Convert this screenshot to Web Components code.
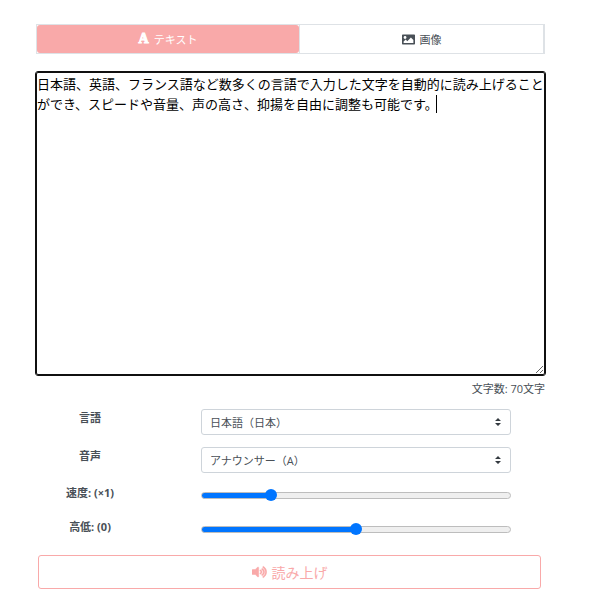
<!DOCTYPE html>
<html lang="ja">
<head>
<meta charset="utf-8">
<meta name="viewport" content="width=device-width, initial-scale=1">
<title>読み上げ</title>
<style>
  body {
    margin: 0;
    background: #fff;
    color: #495057;
    font-family: "Open Sans", "Noto Sans CJK JP", sans-serif;
    font-size: 11px;
  }
</style>
</head>
<body>

<speech-form>
  <mode-tabs slot="tabs">
    <mode-tab selected>
      <span slot="icon" aria-hidden="true">A</span>テキスト
    </mode-tab>
    <mode-tab>
      <svg slot="icon" width="13" height="13" viewBox="0 0 512 512" fill="currentColor" aria-hidden="true"><path d="M484 456H28c-15 0-28-13-28-28V84c0-15 13-28 28-28h456c15 0 28 13 28 28v344c0 15-13 28-28 28zM120 120c-31 0-56 25-56 56s25 56 56 56 56-25 56-56-25-56-56-56zM64 392h384V272l-88-88c-5-5-12-5-17 0L208 320l-56-56c-5-5-12-5-17 0L64 336v56z"/></svg>画像
    </mode-tab>
  </mode-tabs>

  <text-input slot="text">日本語、英語、フランス語など数多くの言語で入力した文字を自動的に読み上げることができ、スピードや音量、声の高さ、抑揚を自由に調整も可能です。</text-input>

  <select-row label="言語" value="日本語（日本）"></select-row>
  <select-row label="音声" value="アナウンサー（A）"></select-row>
  <range-row label="速度: (×1)" min="0.25" max="3.75" value="1"></range-row>
  <range-row label="高低: (0)" min="-20" max="20" value="0"></range-row>

  <speak-button slot="action">読み上げ</speak-button>
</speech-form>

<script>
// page layout
customElements.define(
  'speech-form',
  class extends HTMLElement {
    constructor() {
      super();
      this.attachShadow({mode: 'open'}).innerHTML = `
      <style>
        :host { display: block; padding: 24px 55px 14px 36px; }
        main { display: flex; flex-direction: column; }
        .text { margin-top: 18px; }
        .rows { display: grid; gap: 12px; margin-top: 11px; padding-right: 34px; }
        .action { margin: 14px 4px 0 2px; }
      </style>
      <main>
        <slot name="tabs"></slot>
        <div class="text"><slot name="text"></slot></div>
        <div class="rows"><slot></slot></div>
        <div class="action"><slot name="action"></slot></div>
      </main>
      `;
    }
  }
);

customElements.define(
  'mode-tabs',
  class extends HTMLElement {
    constructor() {
      super();
      this.attachShadow({mode: 'open'}).innerHTML = `
      <style>
        :host { display: block; }
        nav {
          display: grid;
          grid-template-columns: 263fr 244fr;
          border: 1px solid #dee2e6;
        }
      </style>
      <nav><slot></slot></nav>
      `;
    }
  }
);

customElements.define(
  'mode-tab',
  class extends HTMLElement {
    constructor() {
      super();
      this.attachShadow({mode: 'open'}).innerHTML = `
      <style>
        :host { display: block; border-right: 1px solid #dee2e6; }
        button {
          display: flex;
          align-items: center;
          justify-content: center;
          gap: 5px;
          width: 100%;
          height: 28px;
          padding: 0;
          border: 0;
          border-radius: 3px;
          background: #fff;
          color: #495057;
          font: inherit;
        }
        :host([selected]) button { background: #f9a9a9; color: #fff; }
        ::slotted(span) {
          font: bold 14px/14px "Liberation Serif", serif;
          -webkit-text-stroke: 1px currentColor;
        }
      </style>
      <button type="button"><slot name="icon"></slot><span><slot></slot></span></button>
      `;
    }
    connectedCallback() {
      this.shadowRoot.querySelector('button')
        .setAttribute('aria-pressed', this.hasAttribute('selected'));
    }
  }
);

// textarea with the character counter under it
customElements.define(
  'text-input',
  class extends HTMLElement {
    constructor() {
      super();
      this.attachShadow({mode: 'open'}).innerHTML = `
      <style>
        :host { display: block; }
        .field { position: relative; display: flex; }
        textarea {
          flex: 1;
          box-sizing: border-box;
          height: 303px;
          margin: 0;
          padding: 1px 0;
          border: 1px solid #101010;
          border-radius: 2px;
          outline: 1px solid #101010;
          overflow: auto;
          resize: vertical;
          background: #fff;
          color: #000;
          font: 13px/20px "Open Sans", "Noto Sans CJK JP", sans-serif;
          caret-color: transparent;
        }
        /* steady caret at the end of the text, in place of the blinking one */
        .caret {
          position: absolute;
          left: 400px;
          top: 23px;
          width: 1px;
          height: 18px;
          background: #000;
          pointer-events: none;
        }
        .touched .caret { display: none; }
        .touched textarea { caret-color: auto; }
        p { margin: 5px 0 0; text-align: right; line-height: 18px; }
      </style>
      <div class="field">
        <textarea aria-label="テキスト"></textarea>
        <span class="caret"></span>
      </div>
      <p></p>
      `;
    }
    connectedCallback() {
      const field = this.shadowRoot.querySelector('.field');
      const area = this.shadowRoot.querySelector('textarea');
      const count = () => {
        this.shadowRoot.querySelector('p').textContent = `文字数: ${area.value.length}文字`;
      };
      area.value = this.textContent.trim();
      area.addEventListener('input', count);
      for (const type of ['keydown', 'pointerdown', 'blur']) {
        area.addEventListener(type, () => field.classList.add('touched'));
      }
      count();
    }
  }
);

customElements.define(
  'select-row',
  class extends HTMLElement {
    constructor() {
      super();
      this.attachShadow({mode: 'open'}).innerHTML = `
      <style>
        :host {
          display: grid;
          grid-template-columns: 108px 1fr;
          column-gap: 57px;
        }
        label { text-align: center; font-weight: bold; line-height: 18px; }
        .box { display: grid; align-items: center; }
        select, svg { grid-area: 1 / 1; }
        select {
          appearance: none;
          width: 100%;
          height: 26px;
          margin: 0;
          padding: 0 24px 0 8px;
          border: 1px solid #ced4da;
          border-radius: 3px;
          background: #fff;
          color: #495057;
          font: inherit;
        }
        svg { justify-self: end; margin-right: 10px; pointer-events: none; }
      </style>
      <label for="field"></label>
      <div class="box">
        <select id="field"><option></option></select>
        <svg width="6" height="8" viewBox="0 0 6 8" fill="#343a40" aria-hidden="true"><path d="M3 0L0 3h6zm0 8L0 5h6z"/></svg>
      </div>
      `;
    }
    connectedCallback() {
      this.shadowRoot.querySelector('label').textContent = this.getAttribute('label');
      this.shadowRoot.querySelector('option').textContent = this.getAttribute('value');
    }
  }
);

customElements.define(
  'range-row',
  class extends HTMLElement {
    constructor() {
      super();
      this.attachShadow({mode: 'open'}).innerHTML = `
      <style>
        :host {
          display: grid;
          grid-template-columns: 108px 1fr;
          column-gap: 57px;
          align-items: start;
          height: 22px;
        }
        label { text-align: center; font-weight: bold; line-height: 16px; }
        input {
          appearance: none;
          width: 100%;
          height: 21px;
          margin: 0;
          background: none;
        }
        input:focus { outline: none; }
        input::-webkit-slider-runnable-track {
          box-sizing: border-box;
          height: 7px;
          border: 1px solid #bdbdbd;
          border-radius: 4px;
          background: linear-gradient(#0075ff, #0075ff) border-box 0 0 / var(--fill) 100% no-repeat, #efefef;
        }
        input::-webkit-slider-thumb {
          appearance: none;
          width: 12px;
          height: 12px;
          margin-top: -4px;
          border-radius: 50%;
          background: #0075ff;
        }
      </style>
      <label for="field"></label>
      <input type="range" id="field" step="any">
      `;
    }
    connectedCallback() {
      const input = this.shadowRoot.querySelector('input');
      this.shadowRoot.querySelector('label').textContent = this.getAttribute('label');
      input.min = this.getAttribute('min');
      input.max = this.getAttribute('max');
      input.value = this.getAttribute('value');
      const paint = () => {
        const part = (input.value - input.min) / (input.max - input.min);
        input.style.setProperty('--fill', `${Math.round(part * 100)}%`);
      };
      input.addEventListener('input', paint);
      paint();
    }
  }
);

customElements.define(
  'speak-button',
  class extends HTMLElement {
    constructor() {
      super();
      this.attachShadow({mode: 'open'}).innerHTML = `
      <style>
        :host { display: block; }
        button {
          display: flex;
          align-items: center;
          justify-content: center;
          gap: 5px;
          width: 100%;
          height: 34px;
          padding: 0;
          border: 1px solid #f9a9a9;
          border-radius: 3px;
          background: #fff;
          color: #f9a9a9;
          font: inherit;
          font-size: 14px;
        }
      </style>
      <button type="button">
        <svg width="15" height="14" viewBox="0 0 576 512" fill="currentColor" stroke="currentColor" stroke-width="20" aria-hidden="true"><path d="M215 71l-89 89H24c-13 0-24 11-24 24v144c0 13 11 24 24 24h102l89 89c15 15 41 4 41-17V88c0-21-26-32-41-17zm233-23c-12-8-27-4-34 7-7 11-4 26 7 33 57 37 91 100 91 168s-34 131-91 168c-11 7-14 22-7 33 7 11 22 14 34 7 71-47 112-124 112-208S519 94 448 48zm32 208c0-54-28-104-73-133-12-7-27-4-34 8s-4 26 8 34c32 20 51 54 51 91s-19 71-51 91c-12 8-15 23-8 34 6 10 21 17 34 8 45-29 73-79 73-133zm-141-76c-12-7-26-3-33 9s-2 26 9 33c13 7 21 20 21 34s-8 27-21 34c-11 7-15 21-9 33 7 12 22 16 33 9 28-15 45-44 45-76s-17-61-45-76z"/></svg>
        <slot></slot>
      </button>
      `;
    }
  }
);

document.querySelector('text-input').shadowRoot.querySelector('textarea').focus();
</script>
</body>
</html>
